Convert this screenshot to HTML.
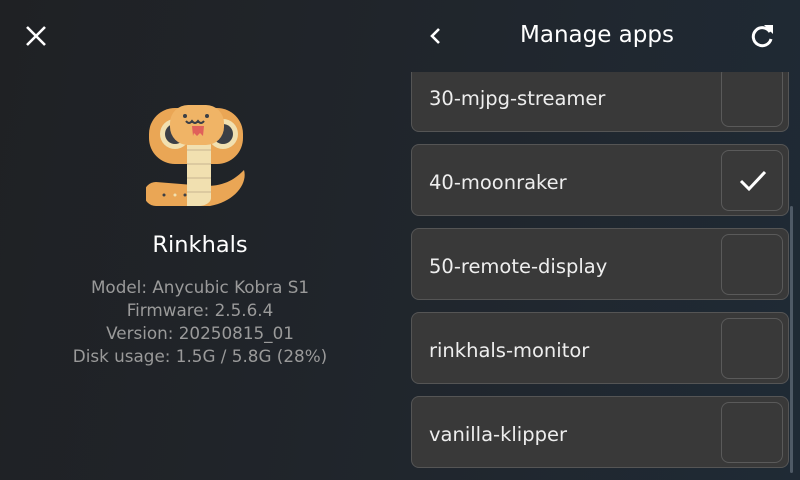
<!DOCTYPE html>
<html><head><meta charset="utf-8"><style>
*{margin:0;padding:0;box-sizing:border-box}
body{width:800px;height:480px;overflow:hidden;position:relative;font-family:"DejaVu Sans","Liberation Sans",sans-serif;background:linear-gradient(100deg,#1f2124 0%,#20252b 45%,#1f2a35 100%);color:#fff}
.t{position:absolute;white-space:nowrap}
.list{position:absolute;left:411px;top:72px;width:380px;height:408px;overflow:hidden}
.item{position:absolute;left:0;width:378px;height:72px;background:#393939;border:1px solid #555;border-radius:8px}
.item span{position:absolute;left:17px;top:2px;line-height:72px;font-size:19.5px;color:#eee}
.cb{position:absolute;right:5px;top:5px;width:62px;height:61px;border:1px solid #5a5a5a;border-radius:8px}
.info{position:absolute;left:0;width:400px;text-align:center;color:#9a9a9a;font-size:16.8px}
</style></head><body>
<svg class="t" style="left:24px;top:24px" width="24" height="24" viewBox="0 0 24 24"><path d="M3 3L21 21M21 3L3 21" stroke="#fff" stroke-width="2.6"/></svg>
<svg class="t" style="left:428px;top:26px" width="16" height="20" viewBox="0 0 16 20"><path d="M11 3L4 10L11 17" stroke="#fff" stroke-width="2.6" fill="none"/></svg>
<div class="t" style="left:520px;top:22px;font-size:23px;color:#fff">Manage apps</div>
<svg class="t" style="left:750px;top:23px" width="26" height="26" viewBox="0 0 26 26"><path d="M20 9A9 9 0 1 0 21 16" stroke="#fff" stroke-width="3" fill="none"/><path d="M14 2L23 2L23 11Z" fill="#fff"/></svg>
<svg class="t" style="left:146px;top:102px" width="104" height="108" viewBox="0 0 104 108">
<rect x="3" y="6" width="94" height="56" rx="26" fill="#eaa655"/>
<circle cx="29" cy="32" r="15" fill="#f1e0b0"/><circle cx="29" cy="32" r="10" fill="#3b3f46"/>
<circle cx="77" cy="32" r="15" fill="#f1e0b0"/><circle cx="77" cy="32" r="10" fill="#3b3f46"/>
<path d="M98 68C102 82 88 100 64 104L10 104A12 12 0 0 1 10 80L60 84C80 84 90 76 98 68Z" fill="#eaa655"/>
<circle cx="18" cy="93" r="1.5" fill="#3b3f46"/><circle cx="29" cy="93" r="1.5" fill="#f1e0b0"/><circle cx="39" cy="93" r="1.5" fill="#3b3f46"/>
<path d="M41 36L65 36L65 96C65 100 60 104 52 104L41 104Z" fill="#f1e0b0"/>
<path d="M41 48H65M41 62H65M41 76H65M41 90H65" stroke="#dccaa0" stroke-width="2"/>
<rect x="24" y="3" width="54" height="40" rx="18" fill="#f0b466"/>
<path d="M40 19q3 4 6 0q3 4 6 0q3 4 6 0" stroke="#3b3f46" stroke-width="2" fill="none"/>
<circle cx="39" cy="14" r="2" fill="#3b3f46"/><circle cx="61" cy="14" r="2" fill="#3b3f46"/>
<path d="M46 24h12l-1 10l-3-3l-3 3l-3-3l-1 3Z" fill="#e0605a"/>
</svg>
<div class="info" style="top:232px;color:#fff;font-size:22.5px">Rinkhals</div>
<div class="info" style="top:277px">Model: Anycubic Kobra S1</div>
<div class="info" style="top:300px">Firmware: 2.5.6.4</div>
<div class="info" style="top:323px">Version: 20250815_01</div>
<div class="info" style="top:346px">Disk usage: 1.5G / 5.8G (28%)</div>
<div class="list">
<div class="item" style="top:-12px"><span>30-mjpg-streamer</span><div class="cb"></div></div>
<div class="item" style="top:72px"><span>40-moonraker</span><div class="cb"><svg style="position:absolute;left:17px;top:18px" width="28" height="24" viewBox="0 0 28 24"><path d="M2 12L10 20L26 3" stroke="#fff" stroke-width="3" fill="none"/></svg></div></div>
<div class="item" style="top:156px"><span>50-remote-display</span><div class="cb"></div></div>
<div class="item" style="top:240px"><span>rinkhals-monitor</span><div class="cb"></div></div>
<div class="item" style="top:324px"><span>vanilla-klipper</span><div class="cb"></div></div>
</div>
<div class="t" style="left:790px;top:206px;width:3px;height:267px;background:#4f5a66;border-radius:2px"></div>
</body></html>
